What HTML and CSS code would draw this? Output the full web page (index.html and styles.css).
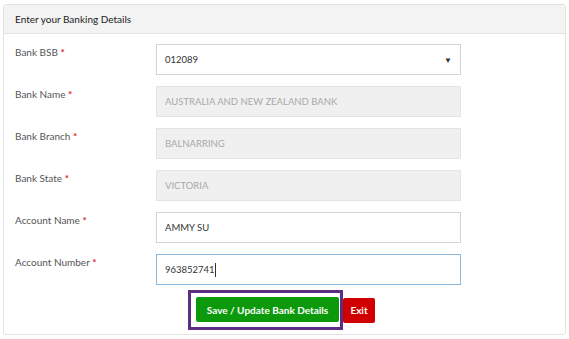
FILE: index.html
```html
<!DOCTYPE html>
<html>
<head>
    <title>Banking Details</title>
    <link rel="stylesheet" href="styles.css">
</head>
<body>
    <div class="panel">
        <div class="panel-heading">Enter your Banking Details</div>
        <div class="panel-body">
            <div class="form-row">
                <label class="form-label">Bank BSB <span class="req">*</span></label>
                <div class="select-box">
                    <span>012089</span>
                    <span class="caret">&#9660;</span>
                </div>
            </div>
            <div class="form-row">
                <label class="form-label">Bank Name <span class="req">*</span></label>
                <input class="form-input" type="text" value="AUSTRALIA AND NEW ZEALAND BANK" disabled>
            </div>
            <div class="form-row">
                <label class="form-label">Bank Branch <span class="req">*</span></label>
                <input class="form-input" type="text" value="BALNARRING" disabled>
            </div>
            <div class="form-row">
                <label class="form-label">Bank State <span class="req">*</span></label>
                <input class="form-input" type="text" value="VICTORIA" disabled>
            </div>
            <div class="form-row">
                <label class="form-label">Account Name <span class="req">*</span></label>
                <input class="form-input" type="text" value="AMMY SU">
            </div>
            <div class="form-row">
                <label class="form-label">Account Number <span class="req">*</span></label>
                <div class="form-input focused">963852741<span class="cursor"></span></div>
            </div>
            <div class="actions">
                <div class="highlight">
                    <button class="btn btn-save">Save / Update Bank Details</button>
                </div>
                <button class="btn btn-exit">Exit</button>
            </div>
        </div>
    </div>
</body>
</html>
```

FILE: styles.css
```css
body {
    margin: 0;
    padding: 4px 3px 0 3px;
    background-color: #fff;
    font-family: Lato, "Open Sans", sans-serif;
    font-size: 10px;
    color: #444;
}
.panel {
    border: 1px solid #e2e2e2;
    border-radius: 3px;
    height: 331px;
    box-sizing: border-box;
}
.panel-heading {
    background-color: #f3f3f3;
    border-bottom: 1px solid #e4e4e4;
    height: 29px;
    box-sizing: border-box;
    padding: 8px 11px;
    font-size: 10px;
    color: #222;
}
.panel-body {
    padding: 10px 104px 0 11px;
}
.form-row {
    display: flex;
    margin-bottom: 11px;
    height: 31px;
}
.form-label {
    width: 141px;
    padding-top: 2px;
    color: #555;
}
.req {
    color: #d9232d;
    font-weight: bold;
}
.form-input,
.select-box {
    flex: 1;
    height: 31px;
    box-sizing: border-box;
    border: 1px solid #d4d4d4;
    background-color: #fff;
    padding: 0 8px;
    font-family: Lato, "Open Sans", sans-serif;
    font-size: 9.5px;
    color: #333;
    display: flex;
    align-items: center;
}
.form-input:disabled {
    background-color: #f0f0f0;
    border-color: #e4e4e4;
    color: #a9a9a9;
}
.select-box {
    justify-content: space-between;
}
.caret {
    font-size: 8px;
    color: #333;
}
.focused {
    border-color: #8ab8dc;
}
.cursor {
    display: inline-block;
    width: 1px;
    height: 14px;
    background-color: #333;
}
.actions {
    display: flex;
    align-items: center;
    padding-left: 173px;
    margin-top: -6px;
}
.highlight {
    border: 3px solid #5b2e83;
    padding: 4px 1px 5px 5px;
}
.btn {
    border: 0;
    border-radius: 2px;
    color: #fff;
    font-family: Lato, "Open Sans", sans-serif;
    font-size: 10px;
    font-weight: bold;
    height: 25px;
    white-space: nowrap;
    cursor: pointer;
}
.btn-save {
    background-color: #0c9a0c;
    width: 143px;
    padding: 0;
}
.btn-exit {
    background-color: #d10000;
    width: 32px;
    padding: 0;
}
```
